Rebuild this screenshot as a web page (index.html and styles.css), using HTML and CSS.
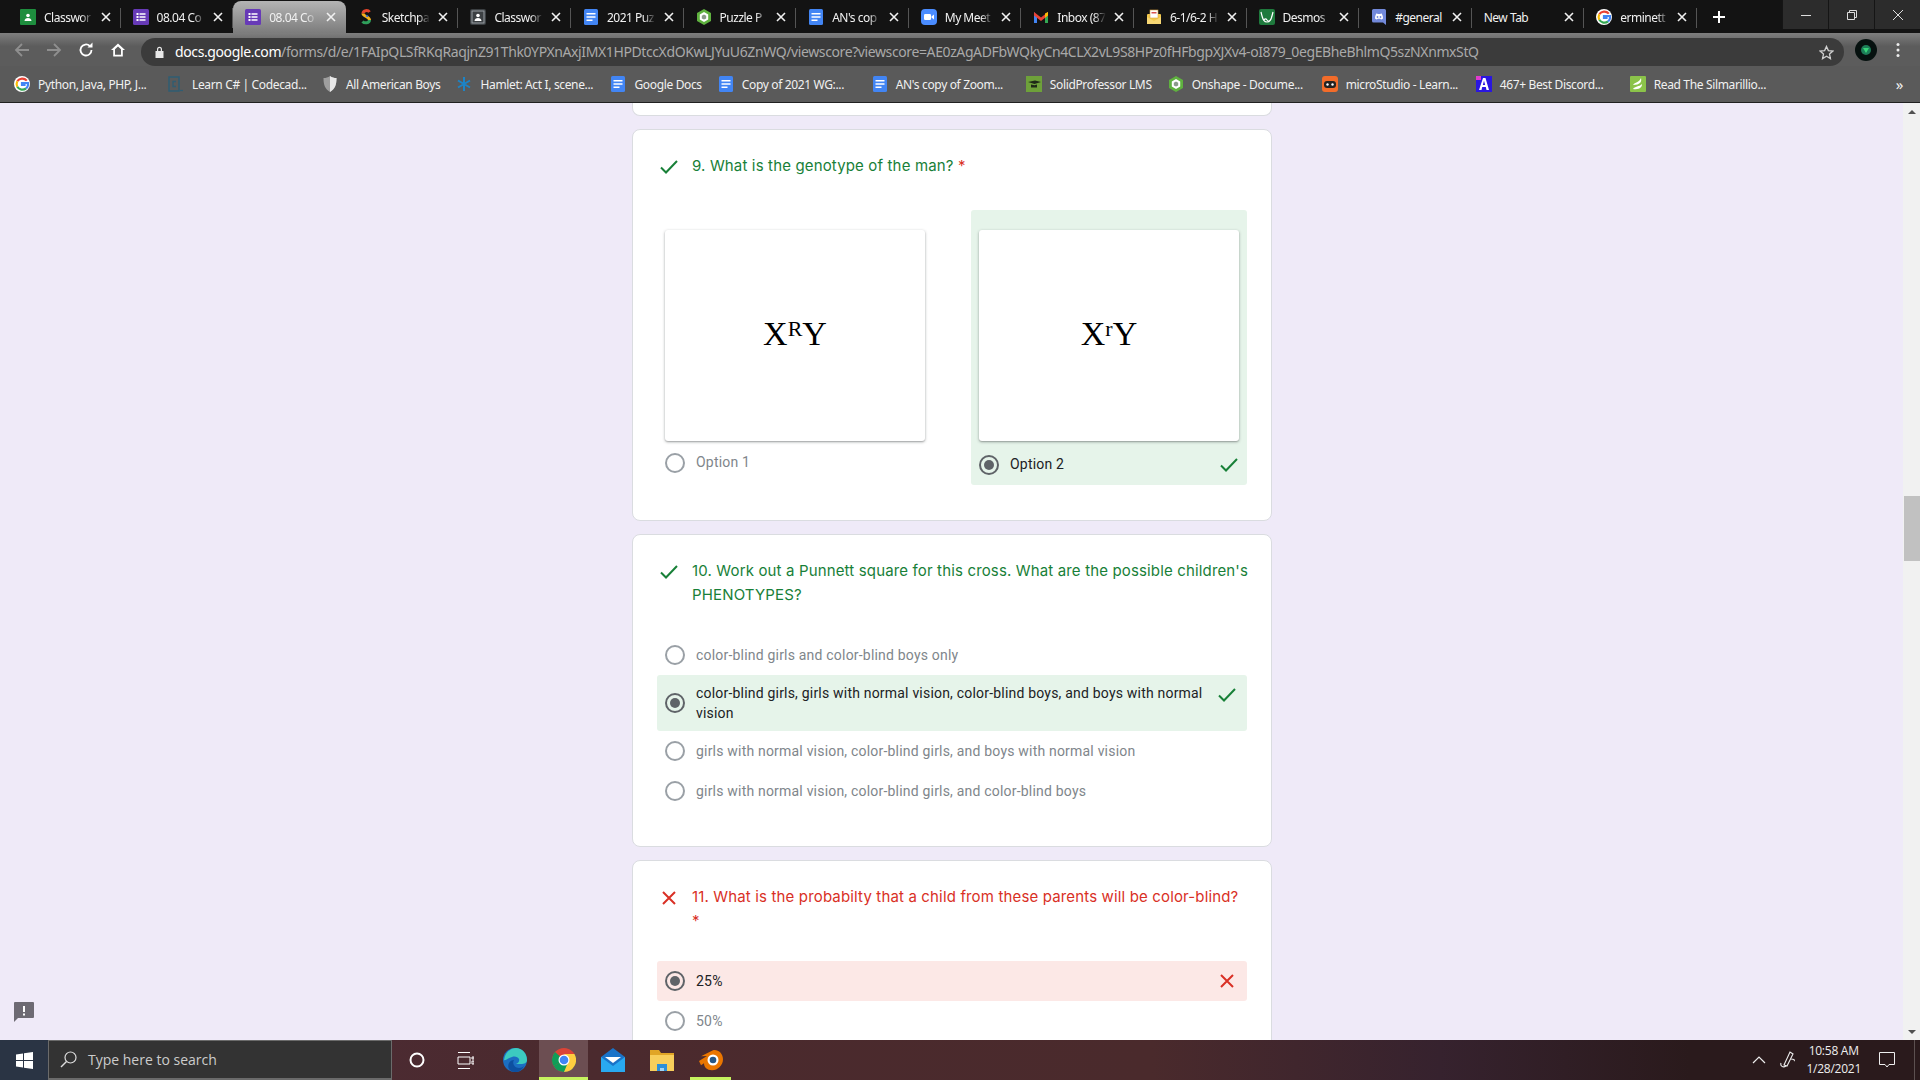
FILE: index.html
```html
<!DOCTYPE html>
<html lang="en">
<head>
    <meta charset="UTF-8">
    <title>08.04 Color-blindness quiz</title>
    <link rel="stylesheet" href="styles.css">
</head>
<body>
    <svg class="defs" width="0" height="0">
        <symbol id="fav-classroom" viewBox="0 0 16 16"><rect width="16" height="16" rx="1" fill="#1e8e3e"/><circle cx="8" cy="6.5" r="1.8" fill="#fff"/><path d="M4.5 12c0-2 1.6-3 3.5-3s3.5 1 3.5 3z" fill="#fff"/></symbol>
        <symbol id="fav-classroom-dark" viewBox="0 0 16 16"><rect width="16" height="16" rx="2" fill="#3c4043"/><rect x="2" y="2" width="12" height="12" fill="none" stroke="#9aa0a6"/><circle cx="8" cy="6.5" r="1.8" fill="#fff"/><path d="M4.5 12c0-2 1.6-3 3.5-3s3.5 1 3.5 3z" fill="#fff"/></symbol>
        <symbol id="fav-forms" viewBox="0 0 16 16"><rect width="16" height="16" rx="1.5" fill="#673ab7"/><path d="M3.5 4h2v2h-2zM3.5 7h2v2h-2zM3.5 10h2v2h-2zM6.5 4.3h6v1.4h-6zM6.5 7.3h6v1.4h-6zM6.5 10.3h6v1.4h-6z" fill="#fff"/></symbol>
        <symbol id="fav-docs" viewBox="0 0 16 16"><rect x="1" width="14" height="16" rx="1.5" fill="#4285f4"/><path d="M3.5 4h9v1.6h-9zM3.5 7.2h9v1.6h-9zM3.500 10.400h6v1.600h-6z" fill="#fff"/></symbol>
        <symbol id="fav-sketch" viewBox="0 0 16 16"><path d="M11.500 3C10 .8 5 1.200 5 4.500" fill="none" stroke="#e8452c" stroke-width="3"/><path d="M5 4.500c0 3 6.500 3 6.500 6.500" fill="none" stroke="#f2b01d" stroke-width="3"/><path d="M11.500 11c0 3.200-5 3.600-7 1.400" fill="none" stroke="#2f9e5b" stroke-width="3"/><path d="M8 6.500l2 1" stroke="#3367d6" stroke-width="1.500"/></symbol>
        <symbol id="fav-onshape" viewBox="0 0 16 16"><path d="M8 0l7 4v8l-7 4-7-4V4z" fill="#5fb13f"/><path d="M8 3l4.200 2.500v5L8 13l-4.200-2.500v-5z" fill="#fff"/><path d="M8 5.500l2.200 1.300v2.600L8 10.500 5.800 9.400V6.800z" fill="#8a9a8a"/></symbol>
        <symbol id="fav-zoom" viewBox="0 0 16 16"><rect width="16" height="16" rx="4" fill="#4a8cff"/><rect x="3" y="5" width="7" height="6" rx="1.300" fill="#fff"/><path d="M10.500 7.500L13 5.500v5l-2.500-2z" fill="#fff"/></symbol>
        <symbol id="fav-gmail" viewBox="0 0 16 16"><path d="M1 3v11h3V7z" fill="#4285f4"/><path d="M15 3v11h-3V7z" fill="#34a853"/><path d="M1 3l7 5.500L15 3v3.500L8 12 1 6.500z" fill="#ea4335"/><path d="M12 4.500L15 3v3.500l-3 2.300z" fill="#fbbc04"/></symbol>
        <symbol id="fav-mail" viewBox="0 0 16 16"><rect x="1" y="5" width="14" height="10" rx="1" fill="#f2c94c"/><rect x="4" y="1" width="8" height="8" fill="#fff" stroke="#d9a441" stroke-width=".6"/><path d="M5.500 3h5v1.500h-5z" fill="#d9534f"/><path d="M1 8l7 4 7-4v7H1z" fill="#f7d774"/></symbol>
        <symbol id="fav-desmos" viewBox="0 0 16 16"><rect width="16" height="16" rx="2" fill="#1f7a3d"/><path d="M2 3c2 9 3.500 10 6 10s4-1 6-10M5 11c1-1.500 2-1.500 3 0s2 1.500 3 0" fill="none" stroke="#fff" stroke-width="1.200"/></symbol>
        <symbol id="fav-discord" viewBox="0 0 16 16"><path d="M2.500 0h11A1.500 1.500 0 0 1 15 1.500V16l-3-2.500H2.500A1.500 1.500 0 0 1 1 12V1.500A1.500 1.500 0 0 1 2.500 0z" fill="#7289da"/><path d="M4 9.500c0-3 1-5 2-5.300l.5.700h3L10 4.200c1 .3 2 2.300 2 5.300-1 .9-2 1-2 1l-.5-.8h-3L6 10.500s-1-.1-2-1z" fill="#fff"/><circle cx="6.500" cy="8" r=".9" fill="#7289da"/><circle cx="9.500" cy="8" r=".9" fill="#7289da"/></symbol>
        <symbol id="fav-google" viewBox="0 0 16 16"><circle cx="8" cy="8" r="8" fill="#fff"/><path d="M12.800 4.600A6 6 0 0 0 3.300 5.200" fill="none" stroke="#ea4335" stroke-width="2.200"/><path d="M3.300 5.200a6 6 0 0 0 0 5.600" fill="none" stroke="#fbbc04" stroke-width="2.200"/><path d="M3.300 10.800a6 6 0 0 0 8.700 1.700" fill="none" stroke="#34a853" stroke-width="2.200"/><path d="M12 12.500A6 6 0 0 0 14 7H8v2h3.600" fill="none" stroke="#4285f4" stroke-width="2.200"/></symbol>
        <symbol id="fav-codecademy" viewBox="0 0 16 16"><rect x="1" y="1" width="10" height="14" fill="none" stroke="#2f5d73" stroke-width="1.500"/><path d="M8 5.500H5v5h3" fill="none" stroke="#2f5d73" stroke-width="1.300"/><path d="M12 14.500h3" stroke="#2f5d73" stroke-width="1.300"/></symbol>
        <symbol id="fav-shield" viewBox="0 0 16 16"><path d="M8 0c2 1.500 4 2 6.500 2 0 7-1.500 11-6.500 14C3 13 1.500 9 1.500 2 4 2 6 1.500 8 0z" fill="#9e9e9e"/><path d="M8 0v16c5-3 6.500-7 6.500-14C12 2 10 1.500 8 0z" fill="#e8e8e8"/></symbol>
        <symbol id="fav-hamlet" viewBox="0 0 16 16"><path d="M8 1v14M2 4.500l12 7M14 4.500l-12 7" stroke="#1d84c6" stroke-width="2"/></symbol>
        <symbol id="fav-solid" viewBox="0 0 16 16"><rect width="16" height="16" fill="#6ea13a"/><path d="M2 6l7-1.500L15 6l-6.500 2z" fill="#1e2a18"/><path d="M5 8.500v3h6v-3l-2.500.8z" fill="#1e2a18"/></symbol>
        <symbol id="fav-micro" viewBox="0 0 16 16"><rect width="16" height="16" rx="3" fill="#f26c2a"/><rect x="2" y="5" width="12" height="7" rx="3" fill="#222"/><circle cx="5.500" cy="8.500" r="1.200" fill="#fff"/><circle cx="10.500" cy="8.500" r="1.200" fill="#fff"/></symbol>
        <symbol id="fav-discordbot" viewBox="0 0 16 16"><rect width="16" height="16" fill="#2a16e0"/><path d="M0 0h5v4H0z" fill="#e23ad0"/><path d="M3 14L7 2h2.500L13 14h-2.500l-.7-3H6.200l-.7 3zm3.800-5h2.400L8 4.800z" fill="#fff"/></symbol>
        <symbol id="fav-silmarillion" viewBox="0 0 16 16"><rect width="16" height="16" rx="1" fill="#8bc34a"/><path d="M3 9c2-3 6-2 8-7 1 4-1 7-8 7zM3 13c2-3 6-2 9-5 0 3-2 6-9 5z" fill="#fff"/></symbol>
        <symbol id="tab-close" viewBox="0 0 10 10"><path d="M1 1l8 8M9 1l-8 8" stroke="#f1f1f1" stroke-width="1.600"/></symbol>
        <symbol id="mark-check" viewBox="0 0 18 14"><path d="M1 7.500l5 5L17 1" fill="none" stroke="#188038" stroke-width="2"/></symbol>
        <symbol id="mark-cross" viewBox="0 0 14 14"><path d="M1 1l12 12M13 1L1 13" fill="none" stroke="#d93025" stroke-width="2"/></symbol>
    </svg>

    <header class="browser">
        <div class="tabstrip">
            <div class="tab"><svg class="fav"><use href="#fav-classroom"/></svg><span class="tab-title">Classwor</span><svg class="tab-x"><use href="#tab-close"/></svg></div>
            <div class="tab"><svg class="fav"><use href="#fav-forms"/></svg><span class="tab-title">08.04 Co</span><svg class="tab-x"><use href="#tab-close"/></svg></div>
            <div class="tab tab-active"><svg class="fav"><use href="#fav-forms"/></svg><span class="tab-title">08.04 Co</span><svg class="tab-x"><use href="#tab-close"/></svg></div>
            <div class="tab"><svg class="fav"><use href="#fav-sketch"/></svg><span class="tab-title">Sketchpa</span><svg class="tab-x"><use href="#tab-close"/></svg></div>
            <div class="tab"><svg class="fav"><use href="#fav-classroom-dark"/></svg><span class="tab-title">Classwor</span><svg class="tab-x"><use href="#tab-close"/></svg></div>
            <div class="tab"><svg class="fav"><use href="#fav-docs"/></svg><span class="tab-title">2021 Puz</span><svg class="tab-x"><use href="#tab-close"/></svg></div>
            <div class="tab"><svg class="fav"><use href="#fav-onshape"/></svg><span class="tab-title">Puzzle P</span><svg class="tab-x"><use href="#tab-close"/></svg></div>
            <div class="tab"><svg class="fav"><use href="#fav-docs"/></svg><span class="tab-title">AN's cop</span><svg class="tab-x"><use href="#tab-close"/></svg></div>
            <div class="tab"><svg class="fav"><use href="#fav-zoom"/></svg><span class="tab-title">My Meet</span><svg class="tab-x"><use href="#tab-close"/></svg></div>
            <div class="tab"><svg class="fav"><use href="#fav-gmail"/></svg><span class="tab-title">Inbox (87</span><svg class="tab-x"><use href="#tab-close"/></svg></div>
            <div class="tab"><svg class="fav"><use href="#fav-mail"/></svg><span class="tab-title">6-1/6-2 H</span><svg class="tab-x"><use href="#tab-close"/></svg></div>
            <div class="tab"><svg class="fav"><use href="#fav-desmos"/></svg><span class="tab-title">Desmos</span><svg class="tab-x"><use href="#tab-close"/></svg></div>
            <div class="tab"><svg class="fav"><use href="#fav-discord"/></svg><span class="tab-title tab-title-full">#general</span><svg class="tab-x"><use href="#tab-close"/></svg></div>
            <div class="tab"><span class="tab-title tab-title-plain">New Tab</span><svg class="tab-x"><use href="#tab-close"/></svg></div>
            <div class="tab"><svg class="fav"><use href="#fav-google"/></svg><span class="tab-title">erminett</span><svg class="tab-x"><use href="#tab-close"/></svg></div>
            <div class="tab-new"><svg width="14" height="14" viewBox="0 0 14 14"><path d="M7 1v12M1 7h12" stroke="#fff" stroke-width="2"/></svg></div>
            <div class="win-controls">
                <div class="win-btn"><svg width="12" height="12" viewBox="0 0 12 12"><path d="M1 6.500h10" stroke="#ddd"/></svg></div>
                <div class="win-btn"><svg width="12" height="12" viewBox="0 0 12 12"><path d="M1.500 3.500h7v7h-7zM3.500 3.500v-2h7v7h-2" fill="none" stroke="#ddd"/></svg></div>
                <div class="win-btn"><svg width="12" height="12" viewBox="0 0 12 12"><path d="M1 1l10 10M11 1L1 11" stroke="#ddd"/></svg></div>
            </div>
        </div>

        <div class="toolbar">
            <div class="tool-btn"><svg width="16" height="16" viewBox="0 0 16 16"><path d="M15 8H2M8 2L2 8l6 6" fill="none" stroke="#8f8f8f" stroke-width="1.800"/></svg></div>
            <div class="tool-btn"><svg width="16" height="16" viewBox="0 0 16 16"><path d="M1 8h13M8 2l6 6-6 6" fill="none" stroke="#8f8f8f" stroke-width="1.800"/></svg></div>
            <div class="tool-btn"><svg width="16" height="16" viewBox="0 0 16 16"><path d="M13.500 8A5.500 5.500 0 1 1 11.800 4" fill="none" stroke="#fff" stroke-width="1.800"/><path d="M9.500 5.500h5v-5z" fill="#fff"/></svg></div>
            <div class="tool-btn"><svg width="16" height="16" viewBox="0 0 16 16"><path d="M8 1.500L1 8h2.200v6.500h9.600V8H15zM5 12.800V7.200l3-2.800 3 2.800v5.600z" fill="#fff"/></svg></div>
            <div class="omnibox">
                <svg class="lock" width="9" height="12" viewBox="0 0 9 12"><path d="M2 5V3.300a2.500 2.500 0 0 1 5 0V5h1.500v7H.5V5zm1.200 0h2.600V3.300a1.300 1.300 0 0 0-2.600 0z" fill="#e8e8e8"/></svg>
                <span class="url"><span class="url-host">docs.google.com</span>/forms/d/e/1FAIpQLSfRKqRaqjnZ91Thk0YPXnAxjIMX1HPDtccXdOKwLJYuU6ZnWQ/viewscore?viewscore=AE0zAgADFbWQkyCn4CLX2vL9S8HPz0fHFbgpXJXv4-oI879_0egEBheBhlmQ5szNXnmxStQ</span>
                <svg class="star" width="15" height="15" viewBox="0 0 16 16"><path d="M8 1.500l2 4.500 4.800.5-3.600 3.200 1 4.800L8 12l-4.200 2.500 1-4.800L1.200 6.500 6 6z" fill="none" stroke="#d0d0d0" stroke-width="1.400"/></svg>
            </div>
            <div class="tool-btn"><svg width="22" height="22" viewBox="0 0 22 22"><circle cx="11" cy="11" r="11" fill="#06110f"/><circle cx="11" cy="11" r="5" fill="#1c7d57"/><path d="M8 9h6l-3 5z" fill="#37d67a"/></svg></div>
            <div class="tool-btn"><svg width="4" height="16" viewBox="0 0 4 16"><circle cx="2" cy="2.500" r="1.500" fill="#eee"/><circle cx="2" cy="8" r="1.500" fill="#eee"/><circle cx="2" cy="13.500" r="1.500" fill="#eee"/></svg></div>
        </div>

        <nav class="bookmarks">
            <a class="bm"><svg class="fav"><use href="#fav-google"/></svg>Python, Java, PHP, J...</a>
            <a class="bm"><svg class="fav"><use href="#fav-codecademy"/></svg>Learn C# | Codecad...</a>
            <a class="bm bm-fit"><svg class="fav"><use href="#fav-shield"/></svg>All American Boys</a>
            <a class="bm"><svg class="fav"><use href="#fav-hamlet"/></svg>Hamlet: Act I, scene...</a>
            <a class="bm bm-fit"><svg class="fav"><use href="#fav-docs"/></svg>Google Docs</a>
            <a class="bm"><svg class="fav"><use href="#fav-docs"/></svg>Copy of 2021 WG:...</a>
            <a class="bm"><svg class="fav"><use href="#fav-docs"/></svg>AN's copy of Zoom...</a>
            <a class="bm bm-fit"><svg class="fav"><use href="#fav-solid"/></svg>SolidProfessor LMS</a>
            <a class="bm"><svg class="fav"><use href="#fav-onshape"/></svg>Onshape - Docume...</a>
            <a class="bm"><svg class="fav"><use href="#fav-micro"/></svg>microStudio - Learn...</a>
            <a class="bm"><svg class="fav"><use href="#fav-discordbot"/></svg>467+ Best Discord...</a>
            <a class="bm"><svg class="fav"><use href="#fav-silmarillion"/></svg>Read The Silmarillio...</a>
            <span class="bm-more">»</span>
        </nav>
    </header>

    <div class="viewport">
        <main class="page">
            <section class="card card-stub"></section>

            <section class="card">
                <div class="question correct">
                    <svg class="q-mark"><use href="#mark-check"/></svg>
                    <div class="q-title">9. What is the genotype of the man? <span class="req">*</span></div>
                </div>
                <div class="image-grid">
                    <div class="choice">
                        <div class="picture">X<sup>R</sup>Y</div>
                        <div class="choice-label"><span class="radio"></span><span class="opt-text">Option 1</span></div>
                    </div>
                    <div class="choice choice-right">
                        <div class="picture">X<sup>r</sup>Y</div>
                        <div class="choice-label"><span class="radio radio-on"></span><span class="opt-text">Option 2</span><svg class="opt-mark"><use href="#mark-check"/></svg></div>
                    </div>
                </div>
            </section>

            <section class="card">
                <div class="question correct">
                    <svg class="q-mark"><use href="#mark-check"/></svg>
                    <div class="q-title">10. Work out a Punnett square for this cross. What are the possible children's PHENOTYPES?</div>
                </div>
                <div class="options">
                    <div class="option"><span class="radio"></span><span class="opt-text">color-blind girls and color-blind boys only</span></div>
                    <div class="option option-right"><span class="radio radio-on"></span><span class="opt-text">color-blind girls, girls with normal vision, color-blind boys, and boys with normal vision</span><svg class="opt-mark opt-mark-top"><use href="#mark-check"/></svg></div>
                    <div class="option"><span class="radio"></span><span class="opt-text">girls with normal vision, color-blind girls, and boys with normal vision</span></div>
                    <div class="option"><span class="radio"></span><span class="opt-text">girls with normal vision, color-blind girls, and color-blind boys</span></div>
                </div>
            </section>

            <section class="card">
                <div class="question wrong">
                    <svg class="q-mark q-mark-x"><use href="#mark-cross"/></svg>
                    <div class="q-title">11. What is the probabilty that a child from these parents will be color-blind?<br><span class="req">*</span></div>
                </div>
                <div class="options">
                    <div class="option option-wrong"><span class="radio radio-on"></span><span class="opt-text">25%</span><svg class="opt-mark opt-mark-x"><use href="#mark-cross"/></svg></div>
                    <div class="option"><span class="radio"></span><span class="opt-text">50%</span></div>
                </div>
            </section>
        </main>

        <svg class="feedback" width="20" height="20" viewBox="0 0 20 20"><path d="M1 0h18a1 1 0 0 1 1 1v14a1 1 0 0 1-1 1H4l-4 4V1a1 1 0 0 1 1-1z" fill="#6d6a73"/><path d="M9 4h2v6H9zM9 11.500h2v2H9z" fill="#fff"/></svg>

        <div class="scrollbar">
            <div class="sb-arrow sb-up"></div>
            <div class="sb-track"><div class="sb-thumb"></div></div>
            <div class="sb-arrow sb-down"></div>
        </div>
    </div>

    <footer class="taskbar">
        <div class="start"><svg width="17" height="17" viewBox="0 0 17 17"><path d="M0 2.500l7-1v6.500H0zM8 1.300l9-1.300v8H8zM0 9h7v6.500l-7-1zM8 9h9v8l-9-1.300z" fill="#fff"/></svg></div>
        <div class="search">
            <svg width="17" height="17" viewBox="0 0 17 17"><circle cx="10.500" cy="6.500" r="5.500" fill="none" stroke="#ddd" stroke-width="1.200"/><path d="M6.500 10.500L1 16" stroke="#ddd" stroke-width="1.400"/></svg>
            <span>Type here to search</span>
        </div>
        <div class="task"><svg width="16" height="16" viewBox="0 0 16 16"><circle cx="8" cy="8" r="6.500" fill="none" stroke="#fff" stroke-width="2"/></svg></div>
        <div class="task"><svg width="17" height="17" viewBox="0 0 17 17"><path d="M1 .5h12M1 16.500h12M1 5h12v7H1zM15 5h2v2h-2zM15 9h2v3h-2z" fill="none" stroke="#fff"/></svg></div>
        <div class="task"><svg width="24" height="24" viewBox="0 0 24 24"><circle cx="12" cy="12" r="12" fill="#1b6ec2"/><path d="M1 12C2 4 8 0 13 0c6 0 11 5 11 12 0 3-3 4-6 4H12c2 0 5-2 4-5-1-2-4-3-7-2-4 1-7 4-8 3z" fill="#3ccbc0"/><path d="M12 24c-6 0-8-5-6-9 1-2 3-3 5-3-2 3 0 8 5 8 2 0 4-1 5-2-2 4-5 6-9 6z" fill="#0d4fa0"/></svg></div>
        <div class="task task-open task-current"><svg width="24" height="24" viewBox="0 0 24 24"><circle cx="12" cy="12" r="12" fill="#db4437"/><path d="M12 12L1.600 18A12 12 0 0 1 3 4z" fill="#0f9d58"/><path d="M12 24A12 12 0 0 1 1.600 18L12 12l10.400-6A12 12 0 0 1 12 24z" fill="#0f9d58"/><path d="M22.400 6A12 12 0 0 1 12 24l5-12-5-6z" fill="#ffcd40"/><circle cx="12" cy="12" r="5.500" fill="#fff"/><circle cx="12" cy="12" r="4.300" fill="#4285f4"/></svg></div>
        <div class="task"><svg width="24" height="24" viewBox="0 0 24 24"><path d="M12 0l12 9v15H0V9z" fill="#1a73c8"/><path d="M0 9l12 9 12-9v15H0z" fill="#29a9f0"/><path d="M4 9h16l-8 6z" fill="#fff"/></svg></div>
        <div class="task"><svg width="24" height="24" viewBox="0 0 24 24"><path d="M0 2h9l2 3h13v3H0z" fill="#e0a526"/><rect y="7" width="24" height="16" fill="#f7ce5b"/><path d="M7 16h10v7H7z" fill="#2b8fd8"/><path d="M10 20h4v3h-4z" fill="#9fd4f5"/></svg></div>
        <div class="task task-open task-running"><svg width="26" height="22" viewBox="0 0 26 22"><path d="M1 12l8-5-6 .2 12-6c5-1 10 3 10 9s-5 11-11 11c-5 0-8-3-8-7l-3 2z" fill="#ea7600"/><circle cx="15" cy="11" r="5.500" fill="#fff"/><circle cx="15" cy="11" r="3.300" fill="#265787"/></svg></div>
        <div class="tray">
            <svg width="14" height="8" viewBox="0 0 14 8"><path d="M1 7l6-6 6 6" fill="none" stroke="#eee" stroke-width="1.200"/></svg>
            <svg class="tray-pen" width="16" height="18" viewBox="0 0 16 18"><path d="M4 14L10 1l3 2-6 12zM1 12c-1 3 2 5 5 3M11 8c3 0 4 1 3 2" fill="none" stroke="#eee" stroke-width="1.100"/></svg>
            <div class="clock"><div>10:58 AM</div><div>1/28/2021</div></div>
            <svg class="tray-note" width="16" height="16" viewBox="0 0 16 16"><path d="M.5.500h15v12h-5.500L8 15l-2-2.500H.5z" fill="none" stroke="#eee"/></svg>
        </div>
    </footer>
</body>
</html>
```

FILE: styles.css
```css
* {
    box-sizing: border-box;
}
html, body {
    height: 100%;
}
body {
    margin: 0;
    display: flex;
    flex-direction: column;
    overflow: hidden;
    font-family: Roboto, "Liberation Sans", sans-serif;
    background-color: #efeaf8;
}
.defs {
    position: absolute;
}

/* browser frame */
.browser {
    flex: none;
    color: #f1f1f1;
    font-family: "Noto Sans", "Open Sans", sans-serif;
    font-size: 12px;
    letter-spacing: -.35px;
    border-bottom: 1px solid #202020;
}
.fav {
    width: 16px;
    height: 16px;
    flex: none;
}
.tabstrip {
    height: 33px;
    display: flex;
    background-color: #131313;
    padding-left: 8px;
}
.tab {
    width: 112.6px;
    flex: none;
    display: flex;
    align-items: center;
    padding: 1px 10px 0 12px;
    position: relative;
}
.tab::after {
    content: "";
    position: absolute;
    right: 0;
    top: 8px;
    height: 20px;
    width: 1px;
    background-color: #555;
}
.tab-active {
    background: linear-gradient(#b4b4b4, #7c7c7c);
    border-radius: 8px 8px 0 0;
    margin-top: 1px;
    padding-top: 0;
}
.tab-active::after {
    display: none;
}
.tab-title {
    flex: 1;
    min-width: 0;
    margin-left: 8px;
    white-space: nowrap;
    letter-spacing: -.5px;
    -webkit-mask-image: linear-gradient(to right, #000 75%, transparent 100%);
    mask-image: linear-gradient(to right, #000 75%, transparent 100%);
}
.tab-title-plain {
    margin-left: 0;
    -webkit-mask-image: none;
    mask-image: none;
}
.tab-title-full {
    -webkit-mask-image: none;
    mask-image: none;
}
.tab-x {
    width: 10px;
    height: 10px;
    flex: none;
    margin-left: 8px;
}
.tab-new {
    width: 28px;
    margin-left: 8px;
    display: flex;
    align-items: center;
    justify-content: center;
    padding-top: 1px;
}
.win-controls {
    margin-left: auto;
    display: flex;
    height: 29px;
    background-color: #2c2c2c;
}
.win-btn {
    width: 46px;
    display: flex;
    align-items: center;
    justify-content: center;
    border-left: 1px solid #151515;
}
.toolbar {
    height: 33px;
    display: flex;
    align-items: center;
    padding: 0 6px;
    background: linear-gradient(#7e7e7e, #5c5c5c 40%);
}
.tool-btn {
    width: 32px;
    height: 28px;
    flex: none;
    display: flex;
    align-items: center;
    justify-content: center;
}
.omnibox {
    flex: 1;
    height: 28px;
    margin: 5px 6px 0 7px;
    padding: 0 10px 0 14px;
    display: flex;
    align-items: center;
    border-radius: 14px;
    background-color: #3b3b3b;
    min-width: 0;
}
.lock {
    flex: none;
}
.url {
    flex: 1;
    margin-left: 11px;
    white-space: nowrap;
    font-size: 14px;
    letter-spacing: -.39px;
    color: #a9a9a9;
    padding-bottom: 1px;
}
.url-host {
    color: #fff;
}
.star {
    flex: none;
}
.bookmarks {
    height: 36px;
    display: flex;
    align-items: center;
    padding-left: 14px;
    background-color: #5a5a5a;
}
.bm {
    width: 154px;
    flex: none;
    display: flex;
    align-items: center;
    gap: 8px;
    white-space: nowrap;
}
.bm-fit {
    width: auto;
    padding-right: 16px;
}
.bm-more {
    margin-left: auto;
    margin-right: 17px;
    font-size: 15px;
}

/* page */
.viewport {
    flex: 1;
    min-height: 0;
    display: flex;
    position: relative;
}
.page {
    flex: 1;
    overflow: hidden;
    display: flex;
    flex-direction: column;
    align-items: center;
    gap: 13px;
    padding-left: 1px;
}
.card {
    flex: none;
    width: 640px;
    padding: 24px 24px 35px 24px;
    background-color: #fff;
    border: 1px solid #dadce0;
    border-radius: 8px;
}
.card-stub {
    height: 13px;
    padding: 0;
    border-top: 0;
    border-radius: 0 0 8px 8px;
}
.question {
    display: flex;
    align-items: flex-start;
    font-family: Inter, Roboto, sans-serif;
    font-size: 15px;
    line-height: 24px;
}
.correct {
    color: #188038;
}
.wrong {
    color: #d93025;
}
.q-mark {
    width: 18px;
    height: 14px;
    flex: none;
    margin: 6px 14px 0 3px;
}
.q-mark-x {
    width: 14px;
    margin: 6px 16px 0 5px;
}
.q-title {
    flex: 1;
    margin-right: -8px;
    letter-spacing: .15px;
}
.req {
    color: #d93025;
}
.image-grid {
    display: grid;
    grid-template-columns: 276px 276px;
    justify-content: space-between;
    margin-top: 32px;
}
.choice {
    padding: 20px 8px 0;
    border-radius: 3px;
}
.choice-right {
    padding-bottom: 10px;
    background-color: #e6f4ea;
}
.picture {
    height: 211px;
    padding-bottom: 3px;
    display: flex;
    align-items: center;
    justify-content: center;
    background-color: #fff;
    border-radius: 3px;
    box-shadow: 0 1px 3px rgba(60, 64, 67, .45), 0 1px 1px rgba(60, 64, 67, .15);
    color: #000;
    font-family: "Liberation Serif", serif;
    font-size: 34px;
}
.picture sup {
    font-size: 22px;
    line-height: 0;
    margin-top: -10px;
}
.choice-label {
    display: flex;
    align-items: center;
    margin-top: 12px;
}
.choice-label .opt-text {
    align-self: flex-start;
    line-height: 18px;
}
.choice-right .choice-label {
    margin-top: 14px;
}
.radio {
    width: 20px;
    height: 20px;
    flex: none;
    border: 2px solid #9aa0a6;
    border-radius: 50%;
    display: flex;
    align-items: center;
    justify-content: center;
}
.radio-on {
    border-color: #5f6368;
}
.radio-on::after {
    content: "";
    width: 10px;
    height: 10px;
    border-radius: 50%;
    background-color: #5f6368;
}
.opt-text {
    flex: 1;
    margin-left: 11px;
    font-size: 14px;
    line-height: 20px;
    letter-spacing: .2px;
    color: #80868b;
}
.choice-right .opt-text,
.option-right .opt-text,
.option-wrong .opt-text {
    color: #202124;
}
.opt-mark {
    width: 18px;
    height: 14px;
    flex: none;
    margin: 0 1px 0 7px;
}
.opt-mark-top {
    align-self: flex-start;
    margin-top: 5px;
}
.opt-mark-x {
    width: 14px;
    margin-right: 3px;
}
.options {
    margin-top: 28px;
}
.option {
    min-height: 40px;
    padding: 8px 10px 8px 8px;
    display: flex;
    align-items: center;
    border-radius: 3px;
}
.option-right {
    background-color: #e6f4ea;
}
.option-wrong {
    background-color: #fce8e6;
}
.feedback {
    position: absolute;
    left: 14px;
    bottom: 18px;
}
.scrollbar {
    width: 17px;
    flex: none;
    display: flex;
    flex-direction: column;
    background-color: #f1f1f1;
}
.sb-arrow {
    height: 17px;
    flex: none;
    display: flex;
    align-items: center;
    justify-content: center;
}
.sb-up::after,
.sb-down::after {
    content: "";
    border-left: 4px solid transparent;
    border-right: 4px solid transparent;
}
.sb-up::after {
    border-bottom: 4px solid #505050;
}
.sb-down::after {
    border-top: 4px solid #505050;
}
.sb-track {
    flex: 1;
    padding: 376px 0 0 1px;
}
.sb-thumb {
    height: 65px;
    background-color: #c1c1c1;
}

/* windows taskbar */
.taskbar {
    height: 40px;
    flex: none;
    display: flex;
    align-items: stretch;
    color: #fff;
    font-family: "Open Sans", "Noto Sans", sans-serif;
    font-size: 12px;
    background: linear-gradient(to right, #4c2c38, #4b2a2e 30%, #4a2a2c 60%, #36222e 75%, #2a1a1c 88%);
}
.start {
    width: 48px;
    display: flex;
    align-items: center;
    justify-content: center;
    background-color: #2a3444;
}
.search {
    width: 344px;
    display: flex;
    align-items: center;
    gap: 11px;
    padding-left: 11px;
    font-size: 14px;
    color: #ccc;
    background-color: #333;
    border: 1px solid #6b6b6b;
    border-bottom-width: 2px;
}
.task {
    width: 49px;
    display: flex;
    align-items: center;
    justify-content: center;
}
.task-open {
    border-bottom: 3px solid #c6f35f;
    padding-top: 3px;
}
.task-current {
    background-color: #6c4e52;
}
.task-running {
    width: 41px;
    margin: 0 4px;
}
.tray {
    margin: 0 5px 0 auto;
    display: flex;
    align-items: center;
    padding-right: 19px;
    border-right: 1px solid #5c5050;
}
.tray-pen {
    margin-left: 14px;
}
.clock {
    margin-left: 10px;
    text-align: center;
    line-height: 18px;
    letter-spacing: -.25px;
    color: #eee;
}
.tray-note {
    margin-left: 18px;
}
```
